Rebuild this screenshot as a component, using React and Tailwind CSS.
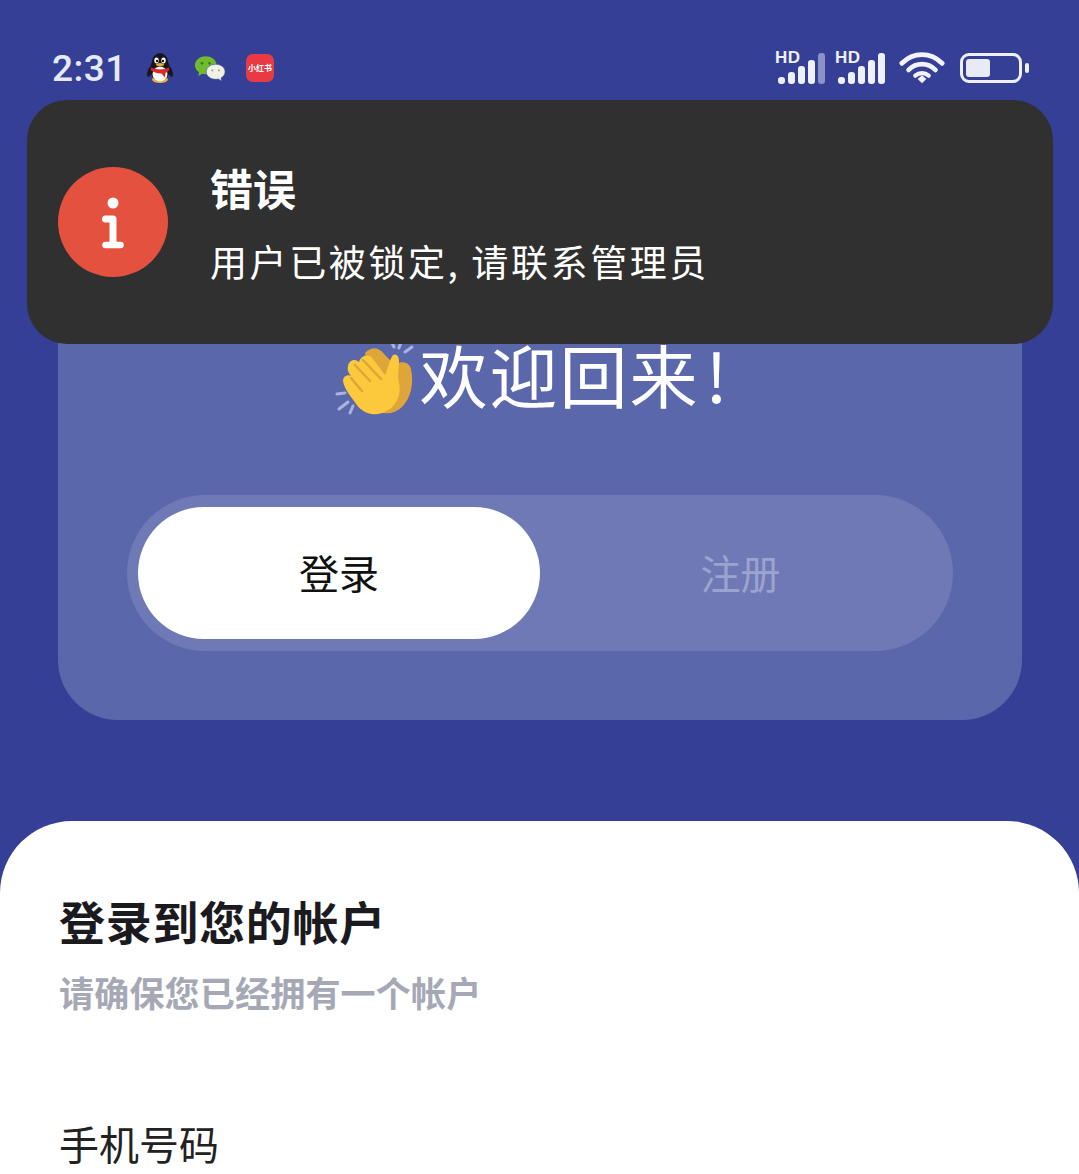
const cjk = { fontFamily: '"Noto Sans CJK SC", "Noto Sans", sans-serif' };

function QQ() {
  return (
    <svg width="26" height="32" viewBox="0 0 26 32">
      <ellipse cx="13" cy="27.5" rx="8" ry="3.5" fill="#e8b32e" />
      <ellipse cx="13" cy="17" rx="10" ry="12" fill="#16161c" />
      <ellipse cx="2.5" cy="20" rx="2" ry="5" fill="#16161c" transform="rotate(15 2.5 20)" />
      <ellipse cx="23.5" cy="20" rx="2" ry="5" fill="#16161c" transform="rotate(-15 23.5 20)" />
      <ellipse cx="13" cy="10" rx="8" ry="9" fill="#16161c" />
      <ellipse cx="13" cy="22" rx="7.5" ry="7.5" fill="#f8f8f4" />
      <ellipse cx="9.5" cy="8.5" rx="2.2" ry="3" fill="#fff" />
      <ellipse cx="16.5" cy="8.5" rx="2.2" ry="3" fill="#fff" />
      <circle cx="10" cy="9" r="1.2" fill="#111" />
      <circle cx="16" cy="9" r="1.2" fill="#111" />
      <ellipse cx="13" cy="12.5" rx="4" ry="1.6" fill="#efa92b" />
      <path d="M4 15.5C9 18 17 18 22 15.5L22 18.5C20 20 19 20.5 18.5 21L18 25.5L14.5 21.5C10 21.5 6 20 4 18.5Z" fill="#d62a2a" />
    </svg>
  );
}

function WeChat() {
  return (
    <svg width="32" height="27" viewBox="0 0 34 28">
      <path d="M12.5 1C5.9 1 1 5.3 1 10.5c0 3.1 1.6 5.6 4.3 7.4L4.6 22l4.3-2.4c1.2.3 2.4.5 3.6.5 6.5 0 11.500-4.200 11.500-9.600S19 1 12.5 1z" fill="#71bb2e" />
      <circle cx="8.5" cy="8.5" r="1.4" fill="#3d7a14" />
      <circle cx="16.5" cy="8.5" r="1.4" fill="#3d7a14" />
      <path d="M23 9.500c-5.800 0-10 3.600-10 8s4.200 8 10 8c1 0 2-.1 2.900-.4l3.600 2.400-.8-3.400c2.700-1.500 4.300-3.900 4.300-6.600 0-4.400-4.200-8-10-8z" fill="#f0f2e4" stroke="#3a4496" strokeWidth=".6" />
      <circle cx="19.500" cy="16" r="1.100" fill="#a7ab9c" />
      <circle cx="26.500" cy="16" r="1.100" fill="#a7ab9c" />
    </svg>
  );
}

function Signal({ dim }) {
  const bars = [
    [0, 26, 7],
    [10, 21, 12],
    [20, 15, 18],
    [30, 9, 24],
    [40, 2, 31],
  ];
  return (
    <div className="relative h-[34px] w-[50px]">
      <span className="absolute left-[-2px] top-[-2px] text-[17px] font-bold leading-[18px] tracking-[.5px] text-[#eef0fa]" style={{ fontFamily: '"Liberation Sans", sans-serif' }}>HD</span>
      <svg width="50" height="34" viewBox="0 0 50 34" className="absolute left-0 top-0">
        {bars.map(([x, y, h], i) => (
          <rect key={i} x={x + 1} y={y} width="7" height={h} rx="3" fill={dim && i === 4 ? '#8a92c6' : '#eef0fa'} />
        ))}
      </svg>
    </div>
  );
}

function Wifi() {
  return (
    <svg width="46" height="36" viewBox="0 0 48 36" fill="none" stroke="#f2f3fb" strokeLinecap="round">
      <path d="M3 13C15 1 33 1 45 13" strokeWidth="5" />
      <path d="M10 20C18 12 30 12 38 20" strokeWidth="5" />
      <path d="M17 26C21 22.500 27 22.500 31 26" strokeWidth="4.500" />
      <path d="M19.500 29.500L24 25.500 28.500 29.500 24 34Z" fill="#f2f3fb" stroke="none" />
    </svg>
  );
}

function Battery() {
  return (
    <div className="flex items-center gap-[3px]">
      <div className="flex h-[30px] w-[62px] items-center rounded-[9px] border-[3px] border-[#eef0fa] p-[3px]">
        <div className="h-full w-[24px] rounded-[3px] bg-[#e8eaf6]" />
      </div>
      <div className="h-[10px] w-[4px] rounded-full bg-[#eef0fa]" />
    </div>
  );
}

function Clap() {
  return (
    <svg width="84" height="76" viewBox="0 0 84 76" className="mt-[10px] shrink-0">
      <g stroke="#a9b4dc" strokeWidth="3" strokeLinecap="round">
        <path d="M57 2L59 6" /><path d="M66 1L64 7" /><path d="M77 6L70 11" />
        <path d="M2 53L10 52" /><path d="M4 68L13 61" /><path d="M15 72L18 65" />
      </g>
      <path d="M30 12C37 5 44 6 50 14L60 24C64 20 74 20 76 28C79 42 76 57 67 66C60 73 50 74 42 70Z" fill="#dea63a" />
      <path d="M13 25C14 19 20 17 24 21C26 14 34 12 38 18L50 34C53 28 54 20 58 14C62 12 64 16 64 20C64 28 62 34 64 42C67 55 60 68 47 72C35 76 25 70 19 60C14 53 9 47 8 40C8 35 13 33 16 35C13 32 12 28 13 25Z" fill="#fcc83c" />
      <g stroke="#dea63a" strokeWidth="2.500" strokeLinecap="round" fill="none">
        <path d="M20 24L35 40" /><path d="M28 19L46 38" /><path d="M16 37L27 50" />
      </g>
    </svg>
  );
}

export default function App() {
  return (
    <div className="relative flex h-[1174px] w-[1079px] flex-col overflow-hidden bg-[#353f96]" style={cjk}>
      {/* status bar */}
      <div className="flex h-[100px] shrink-0 items-center justify-between pl-[52px] pr-[50px] pt-[36px]">
        <div className="flex items-center">
          <span className="w-[74px] text-[37px] font-medium leading-none tracking-[.5px] text-[#e6e9f8]" style={{ fontFamily: 'Roboto, sans-serif' }}>2:31</span>
          <div className="ml-[21px]"><QQ /></div>
          <div className="ml-[21px]"><WeChat /></div>
          <div className="ml-[20px] flex h-[28px] w-[28px] items-center justify-center rounded-[7px] bg-[#e93a44] text-[8px] font-bold leading-none text-white">小红书</div>
        </div>
        <div className="flex items-center">
          <Signal dim />
          <div className="ml-[10px]"><Signal /></div>
          <div className="ml-[12px]"><Wifi /></div>
          <div className="ml-[15px]"><Battery /></div>
        </div>
      </div>

      {/* hero card */}
      <div className="ml-[58px] mt-[140px] flex h-[480px] w-[964px] shrink-0 flex-col rounded-[60px] bg-[#5a67ab] px-[69px] pt-[92px]">
        <div className="flex h-[84px] items-center justify-center pr-[16px] text-[68px] leading-none text-white">
          <Clap />
          <span className="ml-[1px] tracking-[2px]">欢迎回来<span className="ml-[6px]">!</span></span>
        </div>
        <div className="mt-[79px] flex h-[156px] rounded-[78px] bg-[#6f79b5] py-[12px] pl-[11px] pr-[12px]">
          <div className="flex h-[132px] w-[402px] items-center justify-center rounded-[66px] bg-white pb-[2px] text-[40px] text-[#111]">登录</div>
          <div className="flex flex-1 items-center justify-center pb-[2px] text-[40px] text-[#9ba3cf]">注册</div>
        </div>
      </div>

      {/* form sheet */}
      <div className="mt-[101px] flex-1 rounded-t-[72px] bg-white pl-[59px] pr-[60px] pt-[69px]">
        <div className="text-[46px] font-bold leading-[60px] tracking-[.7px] text-[#1b1b1f]">登录到您的帐户</div>
        <div className="mt-[17px] text-[35px] font-bold leading-[50px] tracking-[.2px] text-[#a6a9b5]">请确保您已经拥有一个帐户</div>
        <div className="mt-[96px] text-[40px] leading-[60px] text-[#222]">手机号码</div>
      </div>

      {/* toast */}
      <div className="absolute left-[27px] top-[100px] flex h-[244px] w-[1026px] items-center rounded-[40px] bg-[#303030] pl-[31px]">
        <div className="flex h-[110px] w-[110px] shrink-0 items-center justify-center rounded-full bg-[#e4513f]">
          <svg width="22" height="54" viewBox="0 0 22 54">
            <circle cx="11" cy="8" r="5.500" fill="#fff" />
            <path d="M3.500 24H11V48" fill="none" stroke="#fff" strokeWidth="7" strokeLinecap="round" strokeLinejoin="round" />
            <path d="M3.500 50H18.500" fill="none" stroke="#fff" strokeWidth="6.500" strokeLinecap="round" />
          </svg>
        </div>
        <div className="ml-[42px] flex flex-col">
          <div className="text-[43px] font-bold leading-[60px] text-white">错误</div>
          <div className="mt-[18px] text-[37px] leading-[52px] tracking-[2.600px] text-white">用户已被锁定, 请联系管理员</div>
        </div>
      </div>
    </div>
  );
}
